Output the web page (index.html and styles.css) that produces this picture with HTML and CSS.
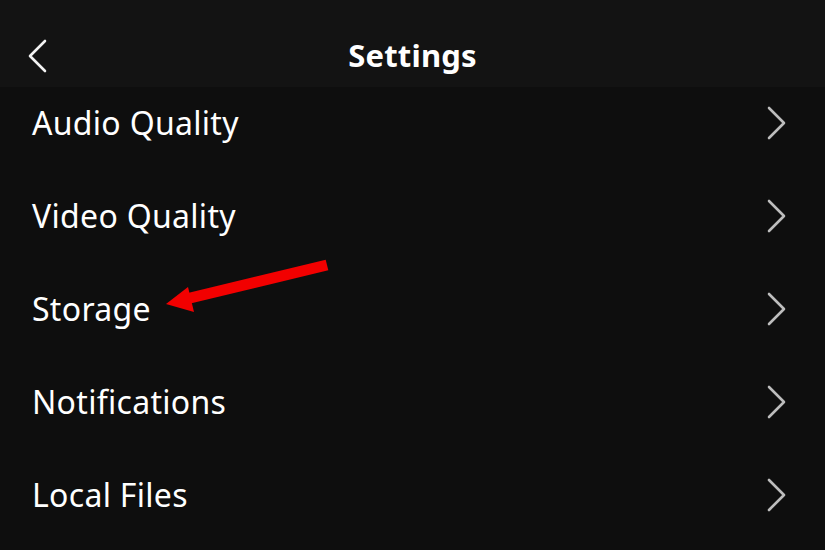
FILE: index.html
```html
<!DOCTYPE html>
<html lang="en">
<head>
    <meta charset="UTF-8">
    <meta name="viewport" content="width=device-width, initial-scale=1.0">
    <title>Settings</title>
    <link rel="stylesheet" href="styles.css">
</head>
<body>
    <div class="screen">
        <header class="top-bar">
            <button class="back-button" aria-label="Back">
                <svg viewBox="0 0 20 34" width="20" height="34">
                    <path d="M18 2 L3 17 L18 32" />
                </svg>
            </button>
            <h1 class="title">Settings</h1>
        </header>

        <ul class="settings-list">
            <li class="settings-item"><span>Audio Quality</span><svg class="chevron" viewBox="0 0 20 34"><path d="M2 2 L17 17 L2 32" /></svg></li>
            <li class="settings-item"><span>Video Quality</span><svg class="chevron" viewBox="0 0 20 34"><path d="M2 2 L17 17 L2 32" /></svg></li>
            <li class="settings-item"><span>Storage</span><svg class="chevron" viewBox="0 0 20 34"><path d="M2 2 L17 17 L2 32" /></svg></li>
            <li class="settings-item"><span>Notifications</span><svg class="chevron" viewBox="0 0 20 34"><path d="M2 2 L17 17 L2 32" /></svg></li>
            <li class="settings-item"><span>Local Files</span><svg class="chevron" viewBox="0 0 20 34"><path d="M2 2 L17 17 L2 32" /></svg></li>
        </ul>

        <!-- red annotation arrow pointing at Storage -->
        <svg class="annotation" viewBox="0 0 825 550" width="825" height="550">
            <line x1="327" y1="265" x2="186" y2="299" class="arrow-shaft" />
            <polygon points="166,304 188,287 194,312" class="arrow-head" />
        </svg>
    </div>
</body>
</html>
```

FILE: styles.css
```css
body {
    margin: 0;
    padding: 0;
    background-color: #0e0e0e;
    font-family: "Noto Sans", Arial, sans-serif;
    color: #fff;
}

.screen {
    position: relative;
    width: 825px;
    height: 550px;
    overflow: hidden;
}

.top-bar {
    position: relative;
    z-index: 1;
    height: 87px;
    background-color: #131313;
    display: flex;
    align-items: center;
    justify-content: center;
}

.back-button {
    position: absolute;
    left: 27px;
    top: 39px;
    background: none;
    border: none;
    padding: 0;
    width: 20px;
    height: 34px;
    cursor: pointer;
}

.back-button svg path,
.chevron path {
    fill: none;
    stroke-width: 2.6;
    stroke-linecap: round;
    stroke-linejoin: round;
}

.back-button svg path {
    stroke: #f2f2f2;
}

.title {
    margin: 0;
    margin-top: 22px;
    font-size: 31px;
    font-weight: 700;
    letter-spacing: 0.2px;
}

.settings-list {
    list-style: none;
    margin: -11px 0 0 0;
    padding: 0;
}

.settings-item {
    height: 93px;
    display: flex;
    align-items: center;
    justify-content: space-between;
    padding: 0 38px 0 32px;
    font-size: 32px;
    letter-spacing: 0.3px;
}

.chevron {
    width: 20px;
    height: 34px;
}

.chevron path {
    stroke: #bdbdbd;
}

.annotation {
    position: absolute;
    left: 0;
    top: 0;
    pointer-events: none;
}

.arrow-shaft {
    stroke: #f20000;
    stroke-width: 11;
}

.arrow-head {
    fill: #f20000;
}
```
